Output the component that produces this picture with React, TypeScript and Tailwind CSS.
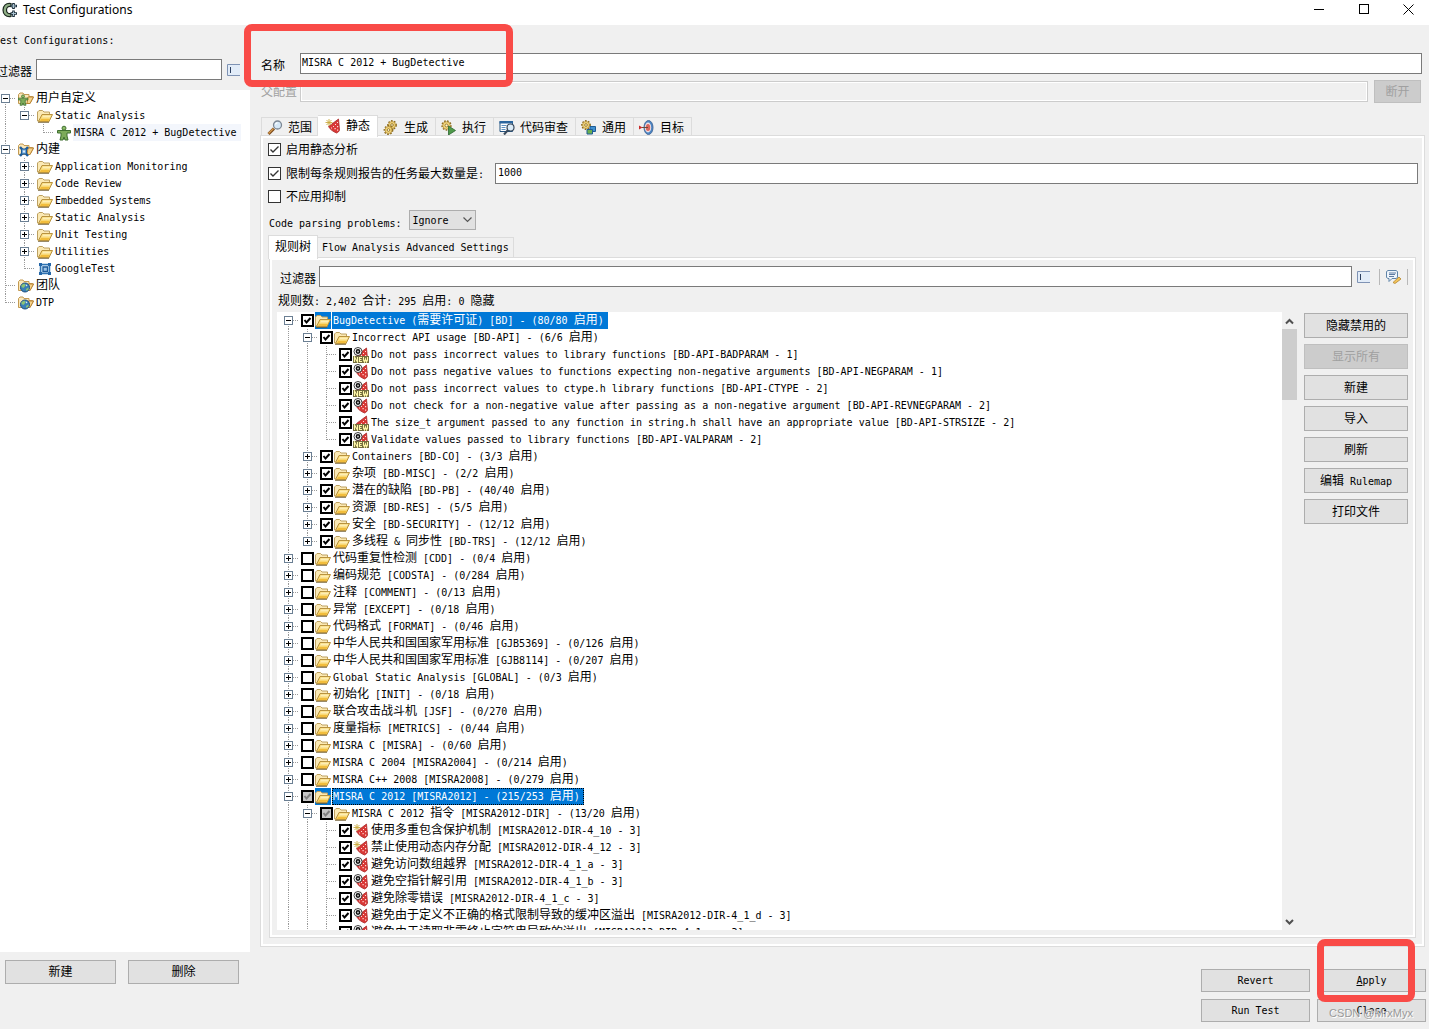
import { Fragment, useState } from "react";
import type { ReactNode } from "react";

type IconName =
  | "folder"
  | "folderUser"
  | "folderBuiltin"
  | "folderGlobe"
  | "person"
  | "builtin"
  | "hat"
  | "hatFlow"
  | "hatNew"
  | "hatFlowNew";

type CheckState = "on" | "off" | "partial";

interface TreeNode {
  label: string;
  icon?: IconName;
  check?: CheckState;
  open?: boolean;
  selected?: "solid" | "focus" | "soft";
  children?: TreeNode[];
}

interface FlatRow {
  node: TreeNode;
  guides: boolean[];
  first: boolean;
  last: boolean;
}

const CONFIGS: TreeNode[] = [
  {
    label: "用户自定义",
    icon: "folderUser",
    open: true,
    children: [
      {
        label: "Static Analysis",
        open: true,
        children: [{ label: "MISRA C 2012 + BugDetective", icon: "person", selected: "soft" }],
      },
    ],
  },
  {
    label: "内建",
    icon: "folderBuiltin",
    open: true,
    children: [
      { label: "Application Monitoring", children: [] },
      { label: "Code Review", children: [] },
      { label: "Embedded Systems", children: [] },
      { label: "Static Analysis", children: [] },
      { label: "Unit Testing", children: [] },
      { label: "Utilities", children: [] },
      { label: "GoogleTest", icon: "builtin" },
    ],
  },
  { label: "团队", icon: "folderGlobe" },
  { label: "DTP", icon: "folderGlobe" },
];

const RULES: TreeNode[] = [
  {
    label: "BugDetective (需要许可证) [BD] - (80/80 启用)",
    check: "on",
    open: true,
    selected: "solid",
    children: [
      {
        label: "Incorrect API usage [BD-API] - (6/6 启用)",
        check: "on",
        open: true,
        children: [
          { label: "Do not pass incorrect values to library functions [BD-API-BADPARAM - 1]", icon: "hatFlowNew", check: "on" },
          { label: "Do not pass negative values to functions expecting non-negative arguments [BD-API-NEGPARAM - 1]", icon: "hatFlow", check: "on" },
          { label: "Do not pass incorrect values to ctype.h library functions [BD-API-CTYPE - 2]", icon: "hatFlowNew", check: "on" },
          { label: "Do not check for a non-negative value after passing as a non-negative argument [BD-API-REVNEGPARAM - 2]", icon: "hatFlow", check: "on" },
          { label: "The size_t argument passed to any function in string.h shall have an appropriate value [BD-API-STRSIZE - 2]", icon: "hatNew", check: "on" },
          { label: "Validate values passed to library functions [BD-API-VALPARAM - 2]", icon: "hatFlowNew", check: "on" },
        ],
      },
      { label: "Containers [BD-CO] - (3/3 启用)", check: "on", children: [] },
      { label: "杂项 [BD-MISC] - (2/2 启用)", check: "on", children: [] },
      { label: "潜在的缺陷 [BD-PB] - (40/40 启用)", check: "on", children: [] },
      { label: "资源 [BD-RES] - (5/5 启用)", check: "on", children: [] },
      { label: "安全 [BD-SECURITY] - (12/12 启用)", check: "on", children: [] },
      { label: "多线程 & 同步性 [BD-TRS] - (12/12 启用)", check: "on", children: [] },
    ],
  },
  { label: "代码重复性检测 [CDD] - (0/4 启用)", check: "off", children: [] },
  { label: "编码规范 [CODSTA] - (0/284 启用)", check: "off", children: [] },
  { label: "注释 [COMMENT] - (0/13 启用)", check: "off", children: [] },
  { label: "异常 [EXCEPT] - (0/18 启用)", check: "off", children: [] },
  { label: "代码格式 [FORMAT] - (0/46 启用)", check: "off", children: [] },
  { label: "中华人民共和国国家军用标准 [GJB5369] - (0/126 启用)", check: "off", children: [] },
  { label: "中华人民共和国国家军用标准 [GJB8114] - (0/207 启用)", check: "off", children: [] },
  { label: "Global Static Analysis [GLOBAL] - (0/3 启用)", check: "off", children: [] },
  { label: "初始化 [INIT] - (0/18 启用)", check: "off", children: [] },
  { label: "联合攻击战斗机 [JSF] - (0/270 启用)", check: "off", children: [] },
  { label: "度量指标 [METRICS] - (0/44 启用)", check: "off", children: [] },
  { label: "MISRA C [MISRA] - (0/60 启用)", check: "off", children: [] },
  { label: "MISRA C 2004 [MISRA2004] - (0/214 启用)", check: "off", children: [] },
  { label: "MISRA C++ 2008 [MISRA2008] - (0/279 启用)", check: "off", children: [] },
  {
    label: "MISRA C 2012 [MISRA2012] - (215/253 启用)",
    check: "partial",
    open: true,
    selected: "focus",
    children: [
      {
        label: "MISRA C 2012 指令 [MISRA2012-DIR] - (13/20 启用)",
        check: "partial",
        open: true,
        children: [
          { label: "使用多重包含保护机制 [MISRA2012-DIR-4_10 - 3]", icon: "hat", check: "on" },
          { label: "禁止使用动态内存分配 [MISRA2012-DIR-4_12 - 3]", icon: "hat", check: "on" },
          { label: "避免访问数组越界 [MISRA2012-DIR-4_1_a - 3]", icon: "hatFlow", check: "on" },
          { label: "避免空指针解引用 [MISRA2012-DIR-4_1_b - 3]", icon: "hatFlow", check: "on" },
          { label: "避免除零错误 [MISRA2012-DIR-4_1_c - 3]", icon: "hatFlow", check: "on" },
          { label: "避免由于定义不正确的格式限制导致的缓冲区溢出 [MISRA2012-DIR-4_1_d - 3]", icon: "hatFlow", check: "on" },
          { label: "避免由于读取非零终止字符串导致的溢出 [MISRA2012-DIR-4_1_e - 3]", icon: "hatFlow", check: "on" },
        ],
      },
      { label: "MISRA C 2012 规则 [MISRA2012-RULE] - (202/233 启用)", check: "partial", children: [] },
    ],
  },
  { label: "OWASP [OWASP] - (0/30 启用)", check: "off", children: [] },
];

function flatten(nodes: TreeNode[], guides: boolean[] = []): FlatRow[] {
  return nodes.flatMap((node, i) => {
    const last = i === nodes.length - 1;
    const row = { node, guides, first: i === 0 && guides.length === 0, last };
    return node.open && node.children ? [row, ...flatten(node.children, [...guides, !last])] : [row];
  });
}

// Latin runs are half the width of a CJK glyph, so they use a smaller monospace size
function T({ children }: { children: string }) {
  return (
    <>
      {children.split(/([\u3400-\u9fff]+)/).map((part, i) =>
        i % 2 ? (
          <span key={i} className="text-[12px]">
            {part}
          </span>
        ) : (
          <Fragment key={i}>{part}</Fragment>
        )
      )}
    </>
  );
}

/* ---------- icons ---------- */

function Svg({ children, w = 16 }: { children: ReactNode; w?: number }) {
  return (
    <svg width={w} height={16} viewBox={`0 0 ${w} 16`} className="shrink-0" aria-hidden="true">
      {children}
    </svg>
  );
}

function FolderShape() {
  return (
    <>
      <path d="M.5 13V4l1.500-1.500h3.500L7 4h5.500v9z" fill="#fbe9b4" stroke="#bda060" />
      <path d="M5 6.500h10.500L12 13.500H1.500z" fill="#f9d873" stroke="#b8923f" />
      <path d="M6 7.500h8L13 9.500H5z" fill="#fdeeb6" />
      <path d="M4 11h8.500l-1 2H3z" fill="#f2bd3c" />
      <path d="M1 14.500h11" stroke="#6e5a2c" strokeOpacity=".7" />
    </>
  );
}

function SmallFolder() {
  return (
    <>
      <path d="M.5 12.500V3.500L2 2h3l1 1.500h5v2H14l1.500.5-3.500 6.500z" fill="#fbe7b8" stroke="#c39a52" />
      <path d="M10 6h5.500L12 12.500H9z" fill="#f8d58c" stroke="#b98538" />
    </>
  );
}

function PersonShape() {
  return (
    <>
      <path d="M1.500 5.500h13v2.500H11v3l1 4H9L8 12l-1 3H4l1-4V8H1.500z" fill="#7dab5a" stroke="#3f6f30" />
      <circle cx="8" cy="3.200" r="2" fill="#8fbd68" stroke="#3f6f30" />
    </>
  );
}

function HatShape() {
  return (
    <>
      <path d="M13.500 1 14.500 12c-.5 1.500-1.500 2.500-3 3C8 13.500 5 11.500 3.500 8.500z" fill="#d93836" stroke="#a82a2a" strokeWidth=".8" />
      <path
        d="M12 4h1v1h-1zM10 6h1v1h-1zM12 8h1.200v1.200H12zM8 8h1v1H8zM9.500 10h1.200v1.200H9.500zM12 11.500h1.200v1.200H12zM6 9.500h1v1H6z"
        fill="#ffdcd8"
      />
    </>
  );
}

function Star() {
  return <path d="M4 1v7M.5 4.500h7M1.500 2l5 5M6.500 2l-5 5" stroke="#c9a93c" strokeWidth=".9" />;
}

function FlowMark() {
  return (
    <>
      <circle cx="5" cy="4.500" r="4" fill="#fff" stroke="#3c3c3c" />
      <circle cx="5" cy="4.500" r="1.700" fill="#bbb" stroke="#111" strokeWidth="1.400" />
    </>
  );
}

function NewMark() {
  return (
    <>
      <path d="M0 9h16v7H0z" fill="#726c3c" />
      <path
        d="M1.500 15v-5l3 5v-5M9 10.500H6.500v4H9M6.500 12.500h2M10.500 10v3l1 2 1-3 1 3 1-2v-3"
        fill="none"
        stroke="#fff8a8"
        strokeWidth="1.100"
      />
    </>
  );
}

function GearShape({ x, y, r }: { x: number; y: number; r: number }) {
  return (
    <>
      <circle cx={x} cy={y} r={r} fill="none" stroke="#8a6a1d" strokeWidth="1.800" strokeDasharray="1.600 1.300" />
      <circle cx={x} cy={y} r={r - 0.5} fill="#f0d47c" stroke="#b08a34" strokeWidth=".7" />
      <circle cx={x} cy={y} r={r / 3} fill="#fff7d8" stroke="#8a6a1d" strokeWidth=".8" />
    </>
  );
}

function Icon({ name }: { name: IconName }) {
  return (
    <Svg>
      {name === "folder" && <FolderShape />}
      {name === "folderUser" && (
        <>
          <SmallFolder />
          <g transform="translate(-1 3) scale(.75)">
            <PersonShape />
          </g>
        </>
      )}
      {name === "folderBuiltin" && (
        <>
          <SmallFolder />
          <path d="M2 5l8 9M10 5l-8 9" stroke="#1f5c99" strokeWidth="2.500" />
          <path d="M3.500 7h5v5h-5z" fill="#6ea5d6" stroke="#1f5c99" />
          <path d="M5 8.500h2v2H5z" fill="#dcebf8" />
        </>
      )}
      {name === "folderGlobe" && (
        <>
          <SmallFolder />
          <circle cx="7" cy="9.500" r="4.500" fill="#3a80b8" stroke="#1b4f80" />
          <path d="M3.500 7l3-1.500 1 2-2 2.500-2-1zM8 11l2.500-1.500v2l-2 1.500z" fill="#8cc474" />
          <path d="M7.500 6.500 9.500 7l-1 1.500z" fill="#e6f2fa" />
        </>
      )}
      {name === "person" && <PersonShape />}
      {name === "builtin" && (
        <>
          <path d="M3.500 3.500h9v9h-9z" fill="#cfe4f6" stroke="#2f73b3" strokeWidth="1.500" />
          <path d="M2 2h3v3H2zM11 2h3v3h-3zM2 11h3v3H2zM11 11h3v3h-3z" fill="#2466a8" />
          <path d="M6 6h4.500v4.500H6z" fill="#9cc4e8" stroke="#1e5a98" strokeWidth="1.300" />
        </>
      )}
      {name === "hat" && (
        <>
          <HatShape />
          <Star />
        </>
      )}
      {name === "hatFlow" && (
        <>
          <HatShape />
          <FlowMark />
        </>
      )}
      {name === "hatNew" && (
        <>
          <HatShape />
          <NewMark />
        </>
      )}
      {name === "hatFlowNew" && (
        <>
          <HatShape />
          <FlowMark />
          <NewMark />
        </>
      )}
    </Svg>
  );
}

const TABS: { label: string; icon: ReactNode }[] = [
  {
    label: "范围",
    icon: (
      <>
        <path d="M1.500 14 7 8.500" stroke="#7a4a1c" strokeWidth="3" />
        <path d="M1.500 13.500 6.500 8.500" stroke="#d79a4c" strokeWidth="1.200" />
        <circle cx="10.500" cy="5" r="4" fill="#d6e8f7" stroke="#7c8794" strokeWidth="1.300" />
        <path d="M8.500 4.500a2 2 0 0 1 2-1.700" fill="none" stroke="#fff" strokeWidth="1.300" />
      </>
    ),
  },
  {
    label: "静态",
    icon: (
      <>
        <HatShape />
        <Star />
      </>
    ),
  },
  {
    label: "生成",
    icon: (
      <>
        <GearShape x={9} y={5} r={4} />
        <GearShape x={5.5} y={10} r={4} />
      </>
    ),
  },
  {
    label: "执行",
    icon: (
      <>
        <GearShape x={5.5} y={5.5} r={4.3} />
        <path d="M7.500 6 14.500 10.500l-7 4.500z" fill="#4f9a4a" stroke="#2c6630" strokeWidth=".8" />
      </>
    ),
  },
  {
    label: "代码审查",
    icon: (
      <>
        <path d="M1 1.500h12.500v10H1z" fill="#fff" stroke="#23527f" />
        <path d="M.5 1h13.500v2.500H.5z" fill="#2a659e" />
        <path d="M2.500 5.500h5M2.500 7.500h4M2.500 9.500h4" stroke="#5d90c0" />
        <circle cx="11.500" cy="7.500" r="3.500" fill="#dcecf8" stroke="#3a4a5c" strokeWidth="1.200" />
        <path d="M9 10 5 14.500" stroke="#3a4a5c" strokeWidth="2" />
      </>
    ),
  },
  {
    label: "通用",
    icon: (
      <>
        <GearShape x={5} y={5} r={4} />
        <path d="M9 6.500h5.500v5H9z" fill="#3f8fd0" stroke="#1f5c94" />
        <path d="M6 9.500h5.500V14H6z" fill="#6cb04f" stroke="#1f5c94" />
      </>
    ),
  },
  {
    label: "目标",
    icon: (
      <>
        <ellipse cx="9.500" cy="7.500" rx="4.500" ry="7" fill="#4a86c4" stroke="#4a6c9c" />
        <ellipse cx="9" cy="7.500" rx="3.200" ry="5" fill="#f1dfe2" />
        <ellipse cx="9" cy="7.500" rx="2.200" ry="3.500" fill="#d9665e" />
        <path d="M3 7.500h6" stroke="#6b4b3a" />
        <path d="M0 5.500 3.500 7.500 0 9.500z" fill="#c92a2a" />
      </>
    ),
  },
];

function ClearIcon() {
  return (
    <svg width="13" height="12" viewBox="0 0 13 12" className="shrink-0" aria-hidden="true">
      <path d="M13 .5H.5v11H13" fill="#e2ecf8" stroke="#7f93b4" />
      <path d="M3.500 3v6" stroke="#2d3f5e" />
    </svg>
  );
}

function AppIcon() {
  return (
    <Svg>
      <path d="M9 1.500C4 .5 1 4 1 8s3 7.500 8 6.500v-3c-3 .5-4.500-1-4.500-3.500S6 4 9 4.500z" fill="#8fae86" stroke="#1d2a20" strokeWidth="1.200" />
      <path d="M11.500 1v6M8.500 4h6.500M11.500 8.500V15M8.500 11.500H15" stroke="#1d2f3c" strokeWidth="2.600" />
      <path d="M11.500 2v4M9.500 4h4.500M11.500 9.500V14M9.500 11.500H14" stroke="#a9c2d0" />
    </Svg>
  );
}

function CommentIcon() {
  return (
    <Svg w={17}>
      <path d="M1.500 2.500 3 1.500h8l1.500 1v6l-1.500 1H7l-3 3v-3H3l-1.500-1z" fill="#eef4fb" stroke="#5f84a8" />
      <path d="M4 4h7M4 5.500h6M4 7.500h5" stroke="#4f6f98" strokeWidth=".9" />
      <path d="M8 13.500 14 8l2 2-6 4.500z" fill="#f3c55c" stroke="#b5852d" strokeWidth=".8" />
    </Svg>
  );
}

/* ---------- small controls ---------- */

function Button({ children, className = "", disabled = false }: { children: ReactNode; className?: string; disabled?: boolean }) {
  return (
    <button
      type="button"
      disabled={disabled}
      className={`flex shrink-0 items-center justify-center border ${
        disabled ? "border-[#bfbfbf] bg-[#cccccc] text-[#a0a0a0]" : "border-[#adadad] bg-[#e1e1e1]"
      } ${className}`}
    >
      <span>{children}</span>
    </button>
  );
}

function Check({ state, id, thick = false }: { state: CheckState; id?: string; thick?: boolean }) {
  const [checked, setChecked] = useState(state !== "off");
  return (
    <span className="grid size-[13px] shrink-0">
      <input
        id={id}
        type="checkbox"
        checked={checked}
        onChange={(e) => setChecked(e.target.checked)}
        className={`col-start-1 row-start-1 size-[13px] appearance-none ${
          thick ? "border-2 border-black" : "border border-[#333]"
        } ${state === "partial" ? "bg-[#c6c6c6]" : "bg-white"}`}
      />
      {checked && (
        <svg width="13" height="13" className="pointer-events-none col-start-1 row-start-1" aria-hidden="true">
          <path
            d={thick ? "M3.500 6 5.500 8.500 9.500 4" : "M2.500 6.500 5 9l5.500-5.500"}
            fill="none"
            stroke={state === "partial" ? "#808080" : thick ? "#000" : "#333"}
            strokeWidth={thick ? 2 : 1.4}
          />
        </svg>
      )}
    </span>
  );
}

function Twisty({ row }: { row: FlatRow }) {
  const box = row.node.children !== undefined;
  return (
    <svg width="19" height="17" className="shrink-0" shapeRendering="crispEdges" aria-hidden="true">
      {!row.first && <path d="M6.500 0v9" stroke="#9a9a9a" strokeDasharray="1 1" />}
      {!row.last && <path d="M6.500 8v9" stroke="#9a9a9a" strokeDasharray="1 1" />}
      <path d="M7 8.500h10" stroke="#9a9a9a" strokeDasharray="1 1" />
      {box && (
        <>
          <path d="M2.500 4.500h8v8h-8z" fill="#fff" stroke="#6b7f93" />
          <path d={row.node.open ? "M4 8.500h5" : "M4 8.500h5M6.500 6v5"} stroke="#000" />
        </>
      )}
    </svg>
  );
}

const SELECTED = {
  solid: "bg-[#0078d7] text-white",
  focus: "bg-[#0078d7] text-white outline-1 -outline-offset-1 outline-dotted outline-black",
  soft: "bg-[#f3f6fc]",
};

function Tree({ nodes, label }: { nodes: TreeNode[]; label: string }) {
  return (
    <ul aria-label={label}>
      {flatten(nodes).map((row, i) => {
        const { node } = row;
        const id = `${label}-${i}`;
        const highlight = node.selected ? SELECTED[node.selected] : "";
        return (
          <li key={id} className="flex h-[17px] items-center whitespace-nowrap">
            {row.guides.map((on, g) => (
              <svg key={g} width="19" height="17" className="shrink-0" shapeRendering="crispEdges" aria-hidden="true">
                {on && <path d="M6.500 0v17" stroke="#9a9a9a" strokeDasharray="1 1" />}
              </svg>
            ))}
            <Twisty row={row} />
            {node.check && <Check id={id} state={node.check} thick />}
            <label htmlFor={node.check ? id : undefined} className="flex h-[17px] items-center">
              <span
                className={`flex h-[17px] items-center ${node.check ? "mx-px" : "mr-px"} ${
                  node.check && node.selected ? "bg-[#0078d7]" : ""
                }`}
              >
                <Icon name={node.icon ?? "folder"} />
              </span>
              <span className={`h-[17px] pl-px leading-[17px] ${node.selected ? "pr-1" : ""} ${highlight}`}>
                <T>{node.label}</T>
              </span>
            </label>
          </li>
        );
      })}
    </ul>
  );
}

/* ---------- panels ---------- */

function TitleBar() {
  return (
    <header className="flex h-[25px] shrink-0 items-start bg-white">
      <div className="flex h-5 flex-1 items-center gap-[5px] pl-0.5">
        <AppIcon />
        <h1 className="font-['Noto_Sans'] text-[12px] leading-5">Test Configurations</h1>
      </div>
      <div className="flex h-[18px] items-center">
        <button type="button" aria-label="Minimize" className="flex w-[45px] justify-center">
          <svg width="11" height="11" shapeRendering="crispEdges">
            <path d="M0 5.500h10" stroke="#000" />
          </svg>
        </button>
        <button type="button" aria-label="Maximize" className="flex w-[45px] justify-center">
          <svg width="11" height="11" shapeRendering="crispEdges">
            <path d="M.5.5h9v9h-9z" fill="none" stroke="#000" />
          </svg>
        </button>
        <button type="button" aria-label="Close window" className="flex w-[42px] justify-center">
          <svg width="11" height="11">
            <path d="M.5.5l10 10M10.500.5l-10 10" stroke="#000" />
          </svg>
        </button>
      </div>
    </header>
  );
}

function Sidebar() {
  return (
    <aside className="flex w-[250px] shrink-0 flex-col overflow-hidden">
      <h2 className="-ml-1.5 h-[34px] pt-2 leading-4">Test Configurations:</h2>
      <div className="-ml-1 mb-2.5 flex h-[21px] items-center">
        <label htmlFor="config-filter" className="w-10 shrink-0 pt-1">
          <T>过滤器</T>
        </label>
        <input id="config-filter" className="mr-[5px] h-[21px] w-[186px] border border-[#7a7a7a] bg-white px-1" />
        <button type="button" aria-label="Clear filter">
          <ClearIcon />
        </button>
      </div>
      <div className="min-h-0 flex-1 overflow-hidden bg-white">
        <div className="-ml-px">
          <Tree nodes={CONFIGS} label="configs" />
        </div>
      </div>
      <div className="flex h-[77px] shrink-0 gap-3 pl-[5px] pt-2">
        <Button className="h-6 w-[111px]">
          <T>新建</T>
        </Button>
        <Button className="h-6 w-[111px]">
          <T>删除</T>
        </Button>
      </div>
    </aside>
  );
}

function Scrollbar() {
  return (
    <div className="flex w-[15px] shrink-0 flex-col items-center">
      <svg width="9" height="17" aria-hidden="true">
        <path d="M1 11.500 4.500 8 8 11.500" fill="none" stroke="#505050" strokeWidth="2" />
      </svg>
      <div className="h-[71px] w-full bg-[#cdcdcd]" />
      <div className="flex-1" />
      <svg width="9" height="17" aria-hidden="true">
        <path d="M1 7 4.500 10.500 8 7" fill="none" stroke="#505050" strokeWidth="2" />
      </svg>
    </div>
  );
}

const SIDE_BUTTONS = ["隐藏禁用的", "显示所有", "新建", "导入", "刷新", "编辑 Rulemap", "打印文件"];

function RulesPanel() {
  return (
    <div className="ml-px mr-0.5 flex min-h-0 flex-1 flex-col border border-[#dcdcdc] px-[7px] pb-[7px] pt-2 shadow-[inset_0_0_0_2px_#fff]">
      <div className="flex h-[21px] shrink-0 items-center">
        <label htmlFor="rule-filter" className="w-[42px] shrink-0 pl-[3px] pt-1">
          <T>过滤器</T>
        </label>
        <input id="rule-filter" className="h-[21px] min-w-0 flex-1 border border-[#7a7a7a] bg-white px-1" />
        <div className="flex h-5 w-14 shrink-0 items-center pl-[5px]">
          <button type="button" aria-label="Clear rule filter">
            <ClearIcon />
          </button>
          <span className="ml-[9px] mr-[5px] h-4 w-px bg-[#b8b8b8]" />
          <button type="button" aria-label="Comments">
            <CommentIcon />
          </button>
          <span className="ml-[5px] h-4 w-px bg-[#b8b8b8]" />
        </div>
      </div>
      <p className="mt-[5px] h-5 shrink-0 pl-px leading-[18px]">
        <T>规则数: 2,402 合计: 295 启用: 0 隐藏</T>
      </p>
      <div className="flex min-h-0 flex-1">
        <div className="min-w-0 flex-1 overflow-hidden bg-white pl-[5px]">
          <Tree nodes={RULES} label="rules" />
        </div>
        <Scrollbar />
        <div className="ml-[7px] flex w-[104px] shrink-0 flex-col gap-1.5 pt-px">
          {SIDE_BUTTONS.map((text) => (
            <Button key={text} className="h-[25px]" disabled={text === "显示所有"}>
              <T>{text}</T>
            </Button>
          ))}
        </div>
      </div>
    </div>
  );
}

function StaticPanel() {
  return (
    <div className="flex min-h-0 flex-1 flex-col border border-[#dcdcdc] pb-2 pl-[7px] pr-1.5 pt-1 shadow-[inset_0_0_0_2px_#fff]">
      <div className="flex h-[19px] shrink-0 items-center gap-[5px]">
        <Check id="enable-static" state="on" />
        <label htmlFor="enable-static">
          <T>启用静态分析</T>
        </label>
      </div>
      <div className="mt-1 flex h-[21px] shrink-0 items-center gap-[5px]">
        <Check id="limit-tasks" state="on" />
        <label htmlFor="limit-tasks" className="w-[204px] shrink-0">
          <T>限制每条规则报告的任务最大数量是:</T>
        </label>
        <input
          aria-label="最大数量"
          defaultValue="1000"
          className="h-[21px] min-w-0 flex-1 border border-[#7a7a7a] bg-white px-0.5 pb-0.5"
        />
      </div>
      <div className="mt-[3px] flex h-[19px] shrink-0 items-center gap-[5px]">
        <Check id="no-suppress" state="off" />
        <label htmlFor="no-suppress">
          <T>不应用抑制</T>
        </label>
      </div>
      <div className="mt-1 flex h-5 shrink-0 items-center gap-2 pl-px">
        <label htmlFor="parsing-problems" className="pt-1.5">
          Code parsing problems:
        </label>
        <span className="grid items-center">
          <select
            id="parsing-problems"
            className="col-start-1 row-start-1 h-5 w-[67px] appearance-none border border-[#adadad] bg-[#e1e1e1] pl-0.5"
          >
            <option>Ignore</option>
            <option>Report</option>
          </select>
          <svg width="9" height="6" className="pointer-events-none col-start-1 row-start-1 mr-1 justify-self-end" aria-hidden="true">
            <path d="M.5.5l4 4 4-4" fill="none" stroke="#555" strokeWidth="1.200" />
          </svg>
        </span>
      </div>

      <div className="mt-[5px] flex shrink-0 items-end" role="tablist">
        <button
          type="button"
          role="tab"
          aria-selected="true"
          className="z-10 -mb-0.5 h-6 border border-b-0 border-[#dcdcdc] bg-white px-1.5 pb-0.5"
        >
          <T>规则树</T>
        </button>
        <button type="button" role="tab" aria-selected="false" className="h-5 border border-b-0 border-l-0 border-[#dcdcdc] px-1">
          Flow Analysis Advanced Settings
        </button>
      </div>
      <RulesPanel />
    </div>
  );
}

function Editor() {
  return (
    <main className="flex min-w-0 flex-1 flex-col pl-2.5 pr-1">
      <div className="mr-[3px] mt-7 flex h-[21px] shrink-0 items-center">
        <label htmlFor="config-name" className="w-10 shrink-0 pl-px pt-1">
          <T>名称</T>
        </label>
        <input
          id="config-name"
          defaultValue="MISRA C 2012 + BugDetective"
          className="h-[21px] min-w-0 flex-1 border border-[#7a7a7a] bg-white px-px pb-0.5"
        />
      </div>
      <div className="mr-1 mt-1.5 flex h-[23px] shrink-0 items-center">
        <label htmlFor="parent-config" className="w-10 shrink-0 pl-px text-[#a0a0a0]">
          <T>父配置</T>
        </label>
        <input
          id="parent-config"
          disabled
          className="h-[21px] min-w-0 flex-1 border border-[#cccccc] bg-[#f0f0f0] px-1 shadow-[inset_0_0_0_1px_#fff]"
        />
        <Button disabled className="ml-1.5 h-[23px] w-[47px]">
          <T>断开</T>
        </Button>
      </div>
      <div className="mt-3 flex shrink-0 items-end pl-px" role="tablist">
        {TABS.map((tab) => {
          const active = tab.label === "静态";
          return (
            <button
              key={tab.label}
              type="button"
              role="tab"
              aria-selected={active}
              className={`flex items-center gap-[5px] border-r border-t border-[#dcdcdc] ${
                active
                  ? "z-10 -mb-0.5 h-[22px] bg-white px-[7px] pb-0.5"
                  : "h-[18px] pl-[5px] pr-[7px] pt-0.5 first:border-l first:pr-[5px]"
              }`}
            >
              <Svg>{tab.icon}</Svg>
              <T>{tab.label}</T>
            </button>
          );
        })}
      </div>
      <StaticPanel />
      <footer className="-mr-px mb-[7px] mt-[22px] grid shrink-0 grid-cols-[109px_109px] justify-end gap-[7px]">
        <Button className="h-[23px]">Revert</Button>
        <Button className="h-[23px]">
          <u>A</u>pply
        </Button>
        <Button className="h-[23px]">Run Test</Button>
        <Button className="h-[23px]">Close</Button>
      </footer>
    </main>
  );
}

export default function App() {
  return (
    <div className="relative flex h-screen flex-col overflow-hidden bg-[#f0f0f0] font-['DejaVu_Sans_Mono','Noto_Sans_CJK_SC',monospace] text-[10px] text-black">
      <TitleBar />
      <div className="flex min-h-0 flex-1">
        <Sidebar />
        <Editor />
      </div>

      {/* Callouts drawn over the dialog */}
      <div className="pointer-events-none absolute left-[244px] top-6 z-20 h-[63px] w-[269px] rounded-lg border-[7px] border-[#f94b47]" />
      <div className="pointer-events-none absolute bottom-[27px] right-3.5 z-20 h-[63px] w-[98px] rounded-lg border-[7px] border-[#f94b47]" />
      <span className="pointer-events-none absolute bottom-2 right-4 z-20 font-['Liberation_Sans'] text-[11px] leading-4 text-[#999] [text-shadow:1px_1px_0_#fff]">
        CSDN @MrxMyx
      </span>
    </div>
  );
}
